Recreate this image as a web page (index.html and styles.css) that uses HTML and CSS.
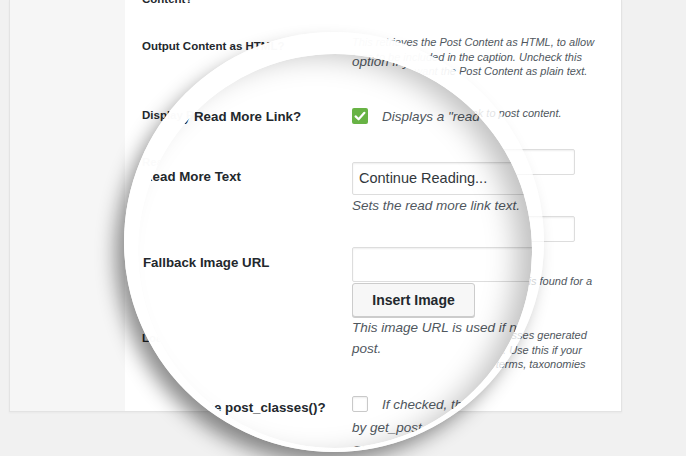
FILE: index.html
```html
<!DOCTYPE html>
<html lang="en">
<head>
    <meta charset="UTF-8">
    <meta name="viewport" content="width=device-width, initial-scale=1.0">
    <title>Slider Settings</title>
    <link rel="stylesheet" href="styles.css">
</head>
<body>
    <!-- settings page, normal size -->
    <div class="panel">
        <div class="panel-side"></div>
        <div class="panel-main">
            <div class="form">
                <div class="row row-a">
                    <div class="label">Content?</div>
                    <div class="field"></div>
                </div>
                <div class="row row-b">
                    <div class="label">Output Content as HTML?</div>
                    <div class="field">
                        <p class="desc">This retrieves the Post Content as HTML, to allow<br>tags to be included in the caption. Uncheck this<br>option if you want the Post Content as plain text.</p>
                    </div>
                </div>
                <div class="row row-c">
                    <div class="label">Display Read More Link?</div>
                    <div class="field">
                        <p class="desc">Displays a "read more" link to post content.</p>
                    </div>
                </div>
                <div class="row row-d">
                    <div class="label">Read More Text</div>
                    <div class="field">
                        <div class="input"></div>
                        <p class="desc">Sets the read more link text.</p>
                    </div>
                </div>
                <div class="row row-e">
                    <div class="label">Fallback Image URL</div>
                    <div class="field">
                        <div class="input"></div>
                        <div class="btn">Insert Image</div>
                        <p class="desc">This image URL is used if no image is found for a<br>post.</p>
                    </div>
                </div>
                <div class="row row-f">
                    <div class="label">Load Theme post_classes()?</div>
                    <div class="field">
                        <p class="desc">If checked, this adds the post classes generated<br>by get_post_class() in the slide. Use this if your<br>Slider styles by post formats, terms, taxonomies</p>
                    </div>
                </div>
            </div>
        </div>
    </div>

    <!-- magnifying glass -->
    <div class="lens">
        <div class="lens-view">
            <div class="zoom">
                <div class="zrow zrow-b">
                    <div class="zlabel">Output Content as HTML?</div>
                    <div class="zfield">
                        <p class="zdesc">This retrieves the Post Content as HTML, to allow<br>tags to be included in the caption. Uncheck this<br>option if you want the Post Content as plain text.</p>
                    </div>
                </div>
                <div class="zrow zrow-c">
                    <div class="zlabel">Display Read More Link?</div>
                    <div class="zfield zfield-check">
                        <span class="zcheck checked">
                            <svg width="16" height="16" viewBox="0 0 16 16" fill="none">
                                <path d="M3.6 8.4L6.6 11.3L12.4 4.8" stroke="#fff" stroke-width="2.2" stroke-linecap="round" stroke-linejoin="round"/>
                            </svg>
                        </span>
                        <p class="zdesc">Displays a "read more" link to post content.</p>
                    </div>
                </div>
                <div class="zrow zrow-d">
                    <div class="zlabel">Read More Text</div>
                    <div class="zfield">
                        <div class="zinput">Continue Reading...</div>
                        <p class="zdesc">Sets the read more link text.</p>
                    </div>
                </div>
                <div class="zrow zrow-e">
                    <div class="zlabel">Fallback Image URL</div>
                    <div class="zfield">
                        <div class="zinput"></div>
                        <div class="zbtn">Insert Image</div>
                        <p class="zdesc">This image URL is used if no image is found for a<br>post.</p>
                    </div>
                </div>
                <div class="zrow zrow-f">
                    <div class="zlabel">Load Theme post_classes()?</div>
                    <div class="zfield">
                        <p class="zdesc zdesc-tall"><span class="zcheck"></span>If checked, this adds the post classes generated<br>by get_post_class() in the slide. Use this if your<br>Slider styles by post formats, terms, taxonomies</p>
                    </div>
                </div>
            </div>
        </div>
    </div>
</body>
</html>
```

FILE: styles.css
```css
:root {
    --page: #f1f1f1;
    --side: #f6f6f6;
    --text: #23282d;
    --muted: #50575e;
    --line: #dddddd;
    --green: #68b345;
}

html, body {
    height: 456px;
}

body {
    margin: 0;
    background: var(--page);
    font-family: "Liberation Sans", Arial, sans-serif;
    color: var(--text);
    position: relative;
    overflow: hidden;
}

/* page underneath */

.panel {
    display: flex;
    margin-left: 9px;
    width: 613px;
    height: 412px;
    border: 1px solid #e3e3e3;
    border-top: 0;
    box-sizing: border-box;
    box-shadow: 0 1px 2px rgba(0, 0, 0, 0.04);
}

.panel-side {
    width: 115px;
    background: var(--side);
}

.panel-main {
    flex: 1;
    background: #fff;
    padding-left: 17px;
}

.form {
    margin-top: -8px;
}

.row {
    display: grid;
    grid-template-columns: 210px 1fr;
}

.label {
    font-size: 11.5px;
    font-weight: bold;
    line-height: 14px;
    color: var(--text);
}

.desc {
    margin: 0;
    font-size: 11px;
    font-style: italic;
    line-height: 14.5px;
    color: var(--muted);
    white-space: nowrap;
}

.row-a { height: 43px; }
.row-b { height: 71px; }
.row-b .label { padding-top: 4px; }
.row-c { height: 43px; }
.row-c .label { padding-top: 2px; }
.row-d { height: 67px; }
.row-d .label { padding-top: 6px; }
.row-e { height: 112px; }
.row-e .label { padding-top: 6px; }
.row-f .label { padding-top: 3px; }

.input {
    width: 223px;
    height: 26px;
    border: 1px solid var(--line);
    border-radius: 2px;
    box-sizing: border-box;
    box-shadow: inset 0 1px 2px rgba(0, 0, 0, 0.07);
    background: #fff;
}

.row-d .desc {
    margin-top: 4px;
}

.btn {
    width: 96px;
    height: 26px;
    margin-top: 2px;
    border: 1px solid #ccc;
    border-radius: 3px;
    box-sizing: border-box;
    background: #f7f7f7;
    font-size: 11px;
    font-weight: bold;
    line-height: 24px;
    text-align: center;
}

.row-e .desc {
    margin-top: 4px;
}

/* magnifier */

.lens {
    position: absolute;
    left: 124px;
    top: 32px;
    width: 420px;
    height: 420px;
    border-radius: 50%;
    background: linear-gradient(to right, rgba(255, 255, 255, 0.98) 0%, rgba(255, 255, 255, 0.97) 72%, rgba(255, 255, 255, 0.72) 100%);
    box-shadow: -10px 12px 20px -2px rgba(0, 0, 0, 0.45);
}

.lens-view {
    position: absolute;
    left: 14px;
    top: 22px;
    width: 394px;
    height: 394px;
    border-radius: 50%;
    overflow: hidden;
    background: #fff;
}

.lens-view::after {
    content: '';
    position: absolute;
    inset: 0;
    border-radius: 50%;
    box-shadow: inset -20px 6px 30px -6px rgba(0, 0, 0, 0.26);
    pointer-events: none;
}

.zoom {
    position: absolute;
    left: 5px;
    top: -45px;
    width: 600px;
}

.zrow {
    display: grid;
    grid-template-columns: 209px 1fr;
}

.zlabel {
    font-size: 13.3px;
    font-weight: bold;
    line-height: 21px;
    color: var(--text);
    white-space: nowrap;
}

.zdesc {
    margin: 0;
    font-size: 13.5px;
    font-style: italic;
    line-height: 21px;
    color: var(--muted);
    white-space: nowrap;
}

.zrow-b { height: 97px; }
.zrow-c { height: 56px; }
.zrow-d { height: 85px; }
.zrow-d .zlabel { padding-top: 3.5px; }
.zrow-e { height: 146px; }
.zrow-e .zlabel { padding-top: 4.5px; }
.zrow-f .zlabel { padding-top: 3.5px; }

.zfield-check {
    display: flex;
    align-items: flex-start;
    gap: 14px;
}

.zcheck {
    display: inline-block;
    width: 16px;
    height: 16px;
    border: 1px solid #c9c9c9;
    border-radius: 2px;
    box-sizing: border-box;
    background: #fff;
    box-shadow: inset 0 1px 2px rgba(0, 0, 0, 0.08);
}

.zcheck.checked {
    margin-top: 2px;
    border: 0;
    background: var(--green);
    box-shadow: none;
}

.zcheck svg {
    display: block;
}

.zdesc-tall {
    line-height: 23px;
}

.zdesc-tall .zcheck {
    vertical-align: -3px;
    margin-right: 14px;
}

.zinput {
    width: 300px;
    height: 33px;
    border: 1px solid var(--line);
    border-radius: 2px;
    box-sizing: border-box;
    box-shadow: inset 0 1px 2px rgba(0, 0, 0, 0.07);
    background: #fff;
    padding-left: 6px;
    font-size: 14.5px;
    line-height: 31px;
    color: #32373c;
}

.zrow-e .zinput {
    height: 35px;
}

.zbtn {
    width: 123px;
    height: 34px;
    margin-top: 1px;
    border: 1px solid #cccccc;
    border-radius: 3px;
    box-sizing: border-box;
    background: #f7f7f7;
    box-shadow: 0 1px 0 #cccccc;
    font-size: 14px;
    font-weight: bold;
    line-height: 32px;
    text-align: center;
    color: #23282d;
}
```
